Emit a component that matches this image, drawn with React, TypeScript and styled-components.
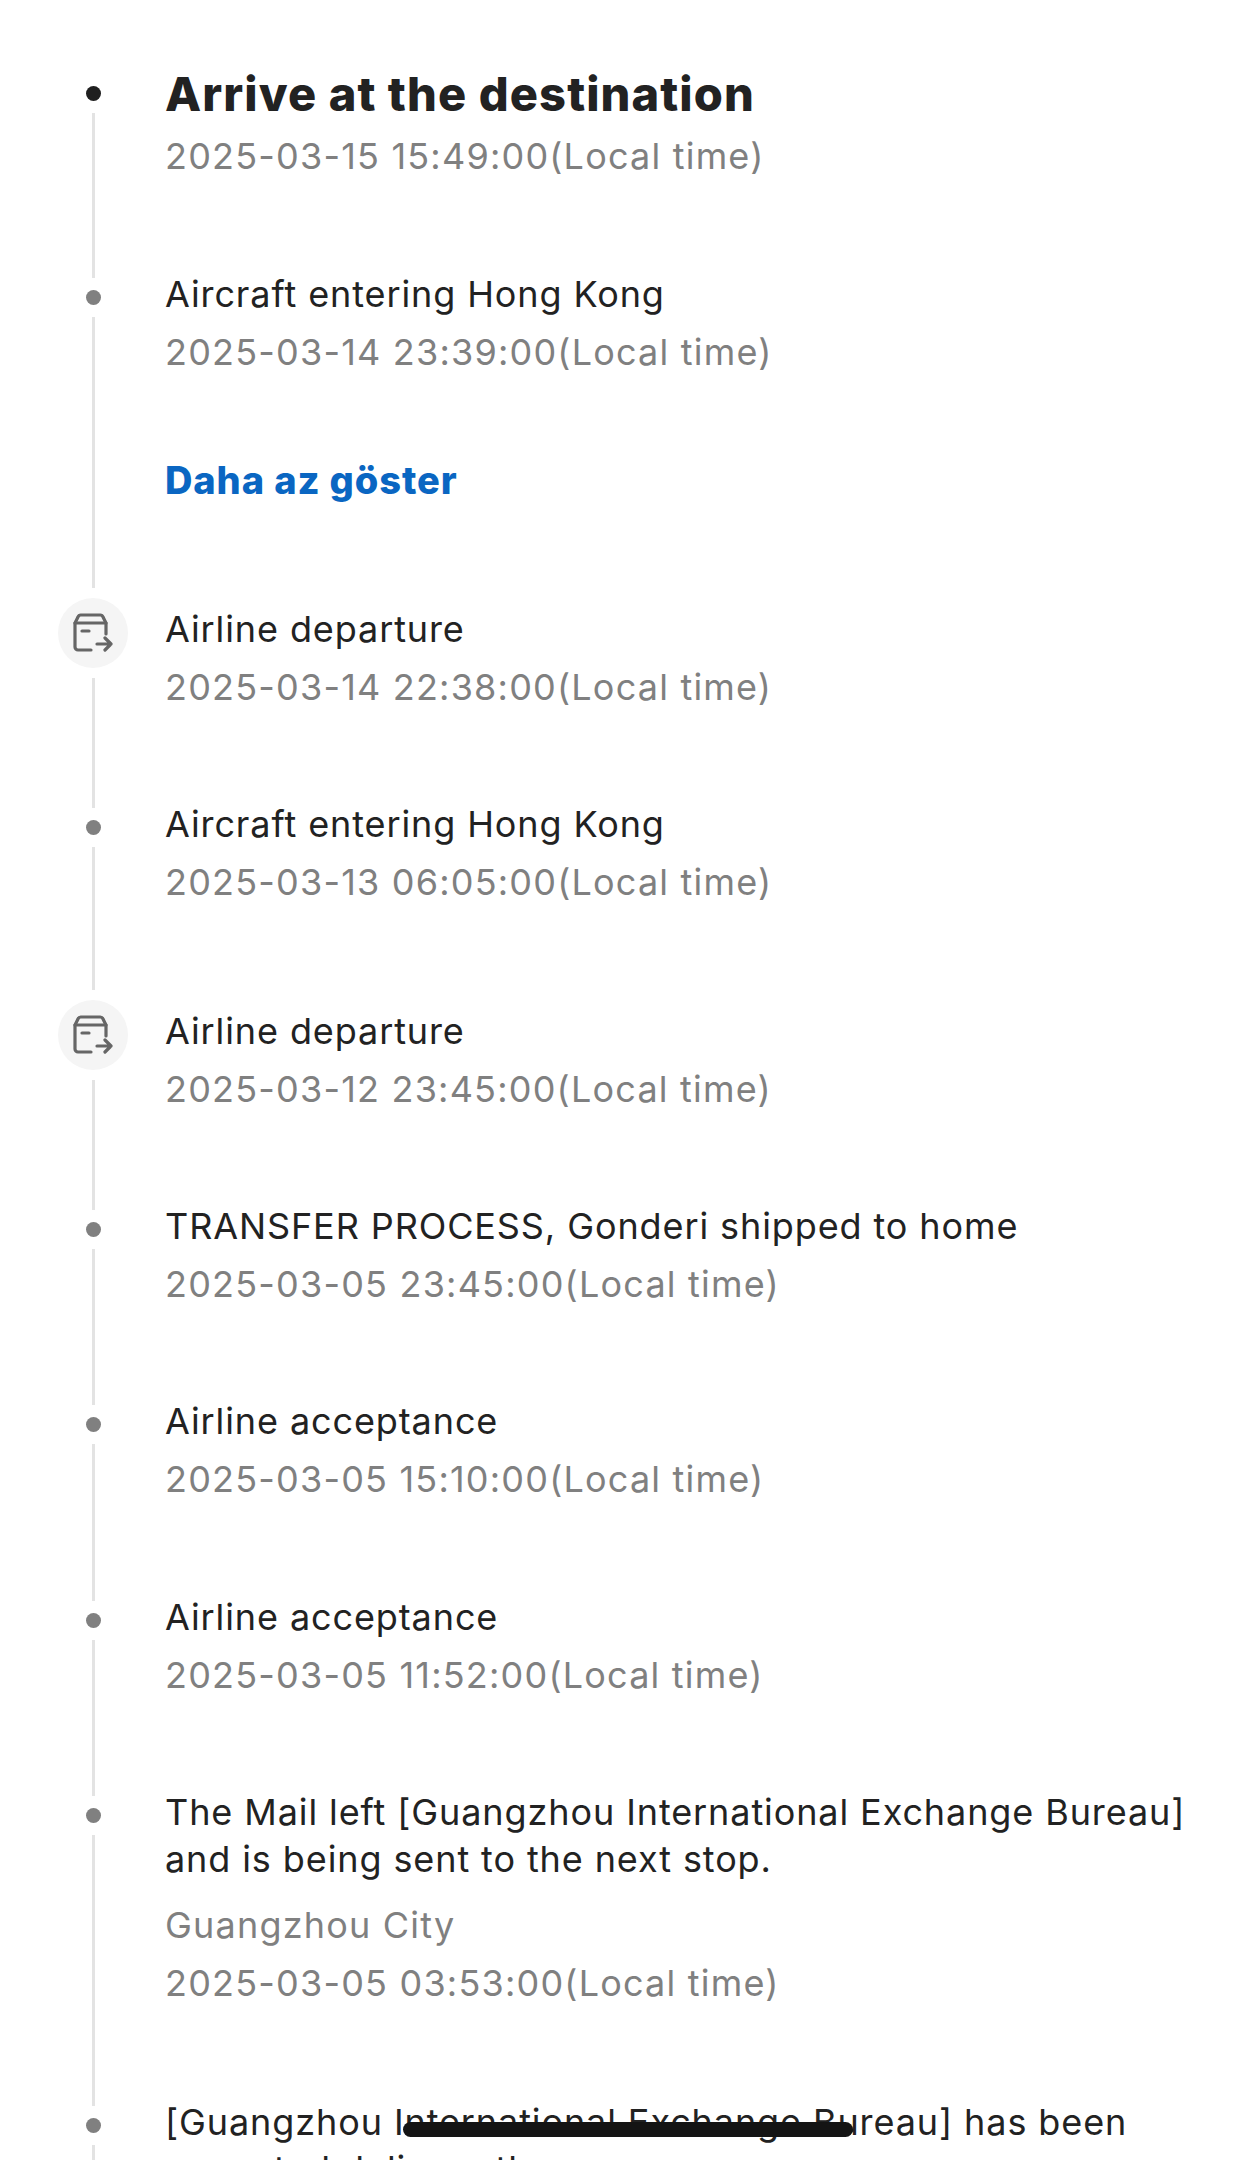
import styled, { createGlobalStyle } from 'styled-components';

const GlobalStyle = createGlobalStyle`
    html, body {
        margin: 0;
        padding: 0;
        height: 2160px;
        overflow: hidden;
        background: #ffffff;
    }
`;

const Timeline = styled.div`
    display: flex;
    flex-direction: column;
    padding: 70px 56px 0 58px;
    font-family: Inter, "Noto Sans", "Liberation Sans", sans-serif;
`;

const Item = styled.div<{ $extra?: number }>`
    display: flex;
    min-height: ${(p) => 195 + (p.$extra || 0)}px;
`;

const Rail = styled.div`
    flex: 0 0 70px;
    display: flex;
    flex-direction: column;
    align-items: center;
`;

const Slot = styled.div<{ $shift?: number }>`
    height: 47px;
    display: flex;
    align-items: center;
    justify-content: center;
    margin-top: ${(p) => p.$shift ?? 3}px;
    margin-bottom: -4px;
`;

const Dot = styled.span<{ $dark?: boolean }>`
    width: 15px;
    height: 15px;
    border-radius: 50%;
    background: ${(p) => (p.$dark ? '#1f1f1f' : '#808080')};
`;

const IconCircle = styled.span`
    flex: none;
    width: 70px;
    height: 70px;
    border-radius: 50%;
    background: #f5f5f5;
    display: flex;
    align-items: center;
    justify-content: center;
    color: #666666;
`;

const Connector = styled.div<{ $tail: number; $head?: number }>`
    flex: 1;
    width: 3px;
    background: #e3e3e3;
    margin-top: ${(p) => p.$head || 0}px;
    margin-bottom: ${(p) => p.$tail}px;
`;

const Body = styled.div`
    flex: 1;
    min-width: 0;
    margin-left: 37px;
`;

const Title = styled.div`
    position: relative;
    font-size: 36px;
    line-height: 47px;
    color: #222222;
    letter-spacing: 0.9px;
`;

const HeadTitle = styled.div`
    font-size: 47px;
    font-weight: 800;
    line-height: 47px;
    color: #222222;
    letter-spacing: 1.1px;
`;

const Meta = styled.div<{ $gap?: number }>`
    margin-top: ${(p) => p.$gap ?? 11}px;
    font-size: 36px;
    line-height: 47px;
    color: #808080;
    letter-spacing: 1.2px;
`;

const ToggleLink = styled.a`
    display: block;
    margin-top: 81px;
    font-size: 38px;
    font-weight: 800;
    line-height: 47px;
    color: #0a66c2;
    letter-spacing: 0.9px;
`;

const MaskBar = styled.span`
    position: absolute;
    left: 238px;
    top: 23px;
    width: 450px;
    height: 15px;
    border-radius: 8px;
    background: #141414;
`;

type Stop = {
    title: string;
    time: string;
    icon?: boolean;
    city?: string;
    extra?: number;
    beforeIcon?: boolean;
};

const stops: Stop[] = [
    { title: 'Airline departure', time: '2025-03-14 22:38:00(Local time)', icon: true },
    { title: 'Aircraft entering Hong Kong', time: '2025-03-13 06:05:00(Local time)', extra: 12, beforeIcon: true },
    { title: 'Airline departure', time: '2025-03-12 23:45:00(Local time)', icon: true },
    { title: 'TRANSFER PROCESS, Gonderi shipped to home', time: '2025-03-05 23:45:00(Local time)' },
    { title: 'Airline acceptance', time: '2025-03-05 15:10:00(Local time)', extra: 1 },
    { title: 'Airline acceptance', time: '2025-03-05 11:52:00(Local time)' },
    {
        title: 'The Mail left [Guangzhou International Exchange Bureau] and is being sent to the next stop.',
        city: 'Guangzhou City',
        time: '2025-03-05 03:53:00(Local time)',
        extra: 115,
    },
];

const BoxArrowIcon = () => (
    <svg width="40" height="40" viewBox="0 0 40 40" fill="none" stroke="currentColor" strokeWidth="3.2" strokeLinecap="round" strokeLinejoin="round">
        <path d="M18 37H5a3 3 0 0 1-3-3V10l3-6a3 3 0 0 1 3-2h19a3 3 0 0 1 3 2l3 6v11" />
        <path d="M2 10h31" />
        <path d="M9 18h7" />
        <path d="M24 31h14M32 25l6 6-6 6" />
    </svg>
);

const App = () => {
    return (
        <>
            <GlobalStyle />
            <Timeline>
                <Item $extra={6}>
                    <Rail>
                        <Slot $shift={0}><Dot $dark /></Slot>
                        <Connector $tail={-7} />
                    </Rail>
                    <Body>
                        <HeadTitle>Arrive at the destination</HeadTitle>
                        <Meta $gap={16}>2025-03-15 15:49:00(Local time)</Meta>
                    </Body>
                </Item>
                <Item $extra={140}>
                    <Rail>
                        <Slot><Dot /></Slot>
                        <Connector $tail={18} />
                    </Rail>
                    <Body>
                        <Title>Aircraft entering Hong Kong</Title>
                        <Meta>2025-03-14 23:39:00(Local time)</Meta>
                        <ToggleLink>Daha az göster</ToggleLink>
                    </Body>
                </Item>
                {stops.map((stop) => (
                    <Item key={stop.time} $extra={stop.extra}>
                        <Rail>
                            <Slot>
                                {stop.icon ? <IconCircle><BoxArrowIcon /></IconCircle> : <Dot />}
                            </Slot>
                            <Connector $head={stop.icon ? 26 : 0} $tail={stop.beforeIcon ? 18 : -7} />
                        </Rail>
                        <Body>
                            <Title>{stop.title}</Title>
                            {stop.city && <Meta $gap={19}>{stop.city}</Meta>}
                            <Meta>{stop.time}</Meta>
                        </Body>
                    </Item>
                ))}
                <Item>
                    <Rail>
                        <Slot><Dot /></Slot>
                        <Connector $tail={0} />
                    </Rail>
                    <Body>
                        <Title>
                            [Guangzhou International Exchange Bureau] has been accepted delivery there.
                            <MaskBar />
                        </Title>
                    </Body>
                </Item>
            </Timeline>
        </>
    );
};

export default App;
